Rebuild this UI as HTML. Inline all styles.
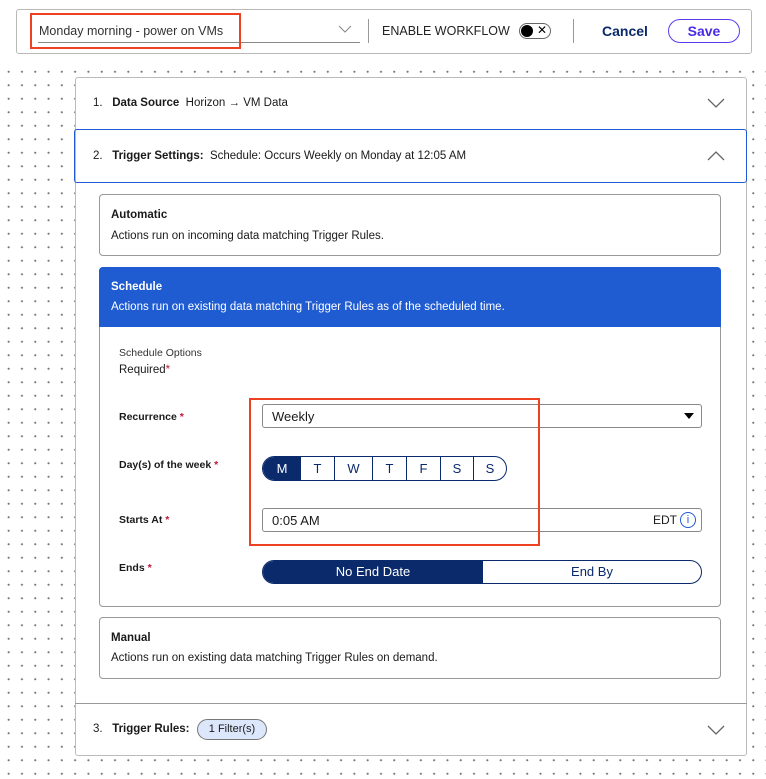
<!DOCTYPE html><html><head><style>
*{box-sizing:border-box;margin:0;padding:0}
body{width:766px;height:779px;position:relative;background:#fff;font-family:"Liberation Sans",sans-serif;color:#1a1a1a;overflow:hidden;
background-image:radial-gradient(circle,#777 0.9px,transparent 1.2px);background-size:13.3px 13.5px;background-position:2px 65px}
.a{position:absolute}
.t{font-size:11.5px}
.b{font-weight:bold}
.star{color:#c0163a}
.d{border-right:1px solid #0a2a6b;text-align:center;line-height:23px}
</style></head><body>
<div class="a" style="left:0;top:0;width:766px;height:62px;background:#fff"></div>
<div class="a" style="left:16px;top:9px;width:736px;height:45px;border:1px solid #b8b8b8;border-radius:3px;background:#fff"></div>
<div class="a" style="left:38px;top:42px;width:322px;height:1px;background:#888"></div>
<div class="a" style="left:39px;top:24px;font-size:12.5px;color:#333">Monday morning - power on VMs</div>
<div class="a" style="left:30px;top:13px;width:211px;height:36px;border:2px solid #ee4122"></div>
<svg class="a" style="left:338px;top:24px" width="14" height="10"><path d="M1 2 L7 8 L13 2" stroke="#888" fill="none"/></svg>
<div class="a" style="left:368px;top:19px;width:1px;height:24px;background:#999"></div>
<div class="a" style="left:382px;top:24px;font-size:12.5px;color:#222">ENABLE WORKFLOW</div>
<div class="a" style="left:519px;top:23px;width:32px;height:16px;border:1px solid #666;border-radius:8px;background:#fff"></div>
<div class="a" style="left:521px;top:25px;width:12px;height:12px;border-radius:6px;background:#000"></div>
<div class="a" style="left:537px;top:23px;font-size:12px;color:#000">✕</div>
<div class="a" style="left:573px;top:19px;width:1px;height:24px;background:#999"></div>
<div class="a b" style="left:602px;top:23px;font-size:14px;color:#0a2a6b">Cancel</div>
<div class="a b" style="left:668px;top:19px;width:72px;height:24px;border:1px solid #5a3cf0;border-radius:12px;color:#4a2ae8;font-size:14px;text-align:center;line-height:22px">Save</div>

<div class="a" style="left:75px;top:77px;width:672px;height:679px;border:1px solid #bbb;border-radius:3px;background:#fff"></div>
<div class="a t" style="left:93px;top:97px">1.&nbsp;&nbsp;&nbsp;<b>Data Source</b>&nbsp; Horizon → VM Data</div>
<svg class="a" style="left:707px;top:98px" width="18" height="11"><path d="M1 1 L9 9 L17 1" stroke="#666" fill="none" stroke-width="1.3"/></svg>
<div class="a" style="left:74px;top:129px;width:673px;height:54px;border:1.5px solid #1f5bd1;border-radius:3px"></div>
<div class="a t" style="left:93px;top:150px">2.&nbsp;&nbsp;&nbsp;<b>Trigger Settings:</b>&nbsp; Schedule: Occurs Weekly on Monday at 12:05 AM</div>
<svg class="a" style="left:707px;top:150px" width="18" height="11"><path d="M1 10 L9 2 L17 10" stroke="#666" fill="none" stroke-width="1.3"/></svg>

<div class="a" style="left:99px;top:194px;width:622px;height:62px;border:1px solid #999;border-radius:4px"></div>
<div class="a t b" style="left:111px;top:209px">Automatic</div>
<div class="a t" style="left:111px;top:230px">Actions run on incoming data matching Trigger Rules.</div>

<div class="a" style="left:99px;top:267px;width:622px;height:340px;border:1px solid #999;border-radius:4px"></div>
<div class="a" style="left:99px;top:267px;width:622px;height:60px;background:#1f5bd1;border-radius:4px 4px 0 0"></div>
<div class="a t b" style="left:111px;top:281px;color:#fff">Schedule</div>
<div class="a t" style="left:111px;top:301px;color:#fff">Actions run on existing data matching Trigger Rules as of the scheduled time.</div>
<div class="a" style="left:119px;top:347px;font-size:10.5px;color:#333">Schedule Options</div>
<div class="a t" style="left:119px;top:364px">Required<span class="star">*</span></div>
<div class="a b" style="left:119px;top:411px;font-size:10.5px">Recurrence <span class="star">*</span></div>
<div class="a b" style="left:119px;top:459px;font-size:10.5px">Day(s) of the week <span class="star">*</span></div>
<div class="a b" style="left:119px;top:514px;font-size:10.5px">Starts At <span class="star">*</span></div>
<div class="a b" style="left:119px;top:562px;font-size:10.5px">Ends <span class="star">*</span></div>
<div class="a" style="left:262px;top:404px;width:440px;height:24px;border:1px solid #888;border-radius:3px"></div>
<div class="a" style="left:272px;top:409px;font-size:13px">Weekly</div>
<svg class="a" style="left:684px;top:413px" width="10" height="7"><path d="M0 0 L10 0 L5 6Z" fill="#000"/></svg>
<div class="a" style="left:262px;top:456px;width:245px;height:25px;border:1px solid #0a2a6b;border-radius:13px;overflow:hidden;display:flex;font-size:13px;color:#0a2a6b">
<div style="width:38px;background:#0a2a6b;color:#fff;text-align:center;line-height:23px">M</div>
<div class="d" style="width:34px">T</div>
<div class="d" style="width:38px">W</div>
<div class="d" style="width:34px">T</div>
<div class="d" style="width:34px">F</div>
<div class="d" style="width:33px">S</div>
<div style="flex:1;text-align:center;line-height:23px">S</div></div>
<div class="a" style="left:262px;top:508px;width:440px;height:24px;border:1px solid #888;border-radius:3px"></div>
<div class="a" style="left:272px;top:513px;font-size:13px">0:05 AM</div>
<div class="a" style="left:653px;top:513px;font-size:12px">EDT</div>
<div class="a" style="left:680px;top:512px;width:16px;height:16px;border:1px solid #1f5bd1;border-radius:8px;color:#1f5bd1;font-size:11px;text-align:center;line-height:14px">i</div>
<div class="a" style="left:262px;top:560px;width:440px;height:24px;border:1px solid #0a2a6b;border-radius:12px;overflow:hidden;display:flex;font-size:13px">
<div style="width:220px;background:#0a2a6b;color:#fff;text-align:center;line-height:22px">No End Date</div>
<div style="flex:1;color:#0a2a6b;text-align:center;line-height:22px">End By</div></div>
<div class="a" style="left:249px;top:398px;width:291px;height:148px;border:2px solid #ee4122"></div>

<div class="a" style="left:99px;top:617px;width:622px;height:62px;border:1px solid #999;border-radius:4px"></div>
<div class="a t b" style="left:111px;top:632px">Manual</div>
<div class="a t" style="left:111px;top:652px">Actions run on existing data matching Trigger Rules on demand.</div>

<div class="a" style="left:75px;top:703px;width:672px;height:1px;background:#999"></div>
<div class="a t" style="left:93px;top:723px">3.&nbsp;&nbsp;&nbsp;<b>Trigger Rules:</b></div>
<div class="a" style="left:197px;top:719px;width:70px;height:21px;border:1px solid #777;border-radius:11px;background:#dde7fb;font-size:11px;text-align:center;line-height:19px">1 Filter(s)</div>
<svg class="a" style="left:707px;top:725px" width="18" height="11"><path d="M1 1 L9 9 L17 1" stroke="#666" fill="none" stroke-width="1.3"/></svg>
</body></html>
